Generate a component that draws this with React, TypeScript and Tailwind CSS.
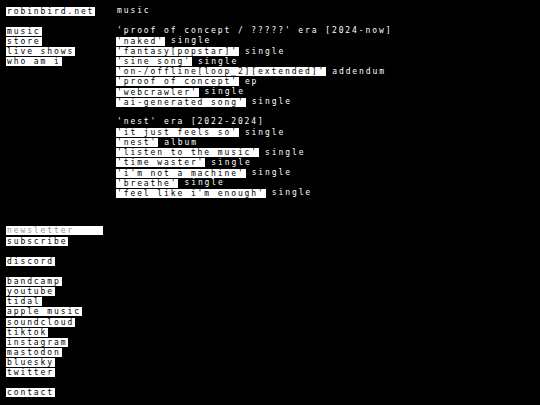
import React from 'react';

const era1 = [
  ['naked', 'single'],
  ['fantasy[popstar]', 'single'],
  ['sine song', 'single'],
  ['on-/offline[loop_2][extended]', 'addendum'],
  ['proof of concept', 'ep'],
  ['webcrawler', 'single'],
  ['ai-generated song', 'single'],
];

const era2 = [
  ['it just feels so', 'single'],
  ['nest', 'album'],
  ['listen to the music', 'single'],
  ['time waster', 'single'],
  ["i'm not a machine", 'single'],
  ['breathe', 'single'],
  ["feel like i'm enough", 'single'],
];

const socials = ['bandcamp', 'youtube', 'tidal', 'apple music', 'soundcloud', 'tiktok', 'instagram', 'mastodon', 'bluesky', 'twitter'];

const Row: React.FC<{ children?: React.ReactNode }> = ({ children }) => (
  <div className="flex h-[10.125px] items-center whitespace-pre">{children}</div>
);

const Box: React.FC<{ children: React.ReactNode }> = ({ children }) => (
  <a href="#" className="inline-block h-[9px] bg-white px-[1px] leading-[9px] text-black">
    {children}
  </a>
);

const Release: React.FC<{ title: string; kind: string }> = ({ title, kind }) => (
  <Row>
    <Box>'{title}'</Box>
    <span className="pl-[6px]">{kind}</span>
  </Row>
);

export default function App() {
  return (
    <div
      className="flex h-screen bg-black text-[8px] tracking-[1.9px] text-white"
      style={{ fontFamily: '"DejaVu Sans Mono", "Liberation Mono", monospace' }}
    >
      <nav className="flex w-[116px] shrink-0 flex-col justify-between pb-[7px] pl-[6px] pt-[6px]">
        <div>
          <Row><Box>robinbird.net</Box></Row>
          <Row />
          <Row><Box>music</Box></Row>
          <Row><Box>store</Box></Row>
          <Row><Box>live shows</Box></Row>
          <Row><Box>who am i</Box></Row>
        </div>
        <div>
          <Row>
            <input
              placeholder="newsletter"
              className="h-[9px] w-[97px] bg-white px-[1px] leading-[9px] text-black outline-none placeholder:text-[#9a9a9a]"
            />
          </Row>
          <Row><Box>subscribe</Box></Row>
          <Row />
          <Row><Box>discord</Box></Row>
          <Row />
          {socials.map((s) => (
            <Row key={s}><Box>{s}</Box></Row>
          ))}
          <Row />
          <Row><Box>contact</Box></Row>
        </div>
      </nav>
      <main className="pt-[6px]">
        <Row><span className="pl-[1px]">music</span></Row>
        <Row />
        <Row><span className="pl-[1px]">'proof of concept / ?????' era [2024-now]</span></Row>
        {era1.map(([t, k]) => (
          <Release key={t} title={t} kind={k} />
        ))}
        <Row />
        <Row><span className="pl-[1px]">'nest' era [2022-2024]</span></Row>
        {era2.map(([t, k]) => (
          <Release key={t} title={t} kind={k} />
        ))}
      </main>
    </div>
  );
}
